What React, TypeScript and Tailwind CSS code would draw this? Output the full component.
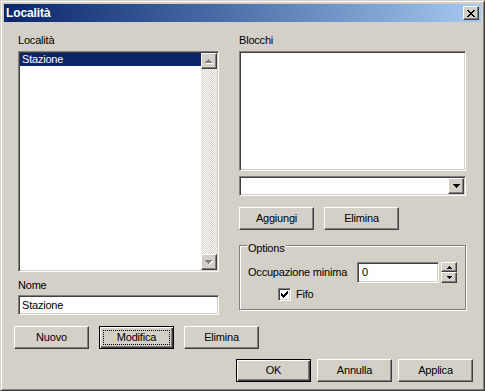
const raised = "bg-[#d4d0c8] border border-t-white border-l-white border-r-[#404040] border-b-[#404040] shadow-[inset_-1px_-1px_#808080]";
const sunken = "bg-white border border-t-[#808080] border-l-[#808080] border-r-white border-b-white shadow-[inset_1px_1px_#404040,inset_-1px_-1px_#d4d0c8]";

function Arrow({ d, w, h, disabled }: { d: string; w: number; h: number; disabled?: boolean }) {
    if (disabled) {
        return (
            <svg width={w + 1} height={h + 1} viewBox={`0 0 ${w + 1} ${h + 1}`} shapeRendering="crispEdges">
                <path d={d} fill="#ffffff" transform="translate(1 1)" />
                <path d={d} fill="#808080" />
            </svg>
        );
    }
    return (
        <svg width={w} height={h} viewBox={`0 0 ${w} ${h}`} shapeRendering="crispEdges">
            <path d={d} fill="#000000" />
        </svg>
    );
}

const UP7 = "M3 0h1v1h1v1h1v1h1v1H0V3h1V2h1V1h1z";
const DOWN7 = "M0 0h7v1h-1v1h-1v1h-1v1h-1V3H2V2H1V1H0z";
const UP5 = "M2 0h1v1h1v1h1v1H0V2h1V1h1z";
const DOWN5 = "M0 0h5v1H4v1H3v1H2V2H1V1H0z";

function Button({ label, isDefault, focused }: { label: string; isDefault?: boolean; focused?: boolean }) {
    // bottone windows classico, il default ha il bordo nero
    const cls = isDefault
        ? "bg-[#d4d0c8] border border-black shadow-[inset_1px_1px_#ffffff,inset_-1px_-1px_#404040,inset_-2px_-2px_#808080]"
        : raised;
    return (
        <div className={`${cls} w-[75px] h-[23px] flex p-[3px]`}>
            <div className={`flex-1 flex items-center justify-center border ${focused ? "border-dotted border-black" : "border-transparent"}`}>
                {label}
            </div>
        </div>
    );
}

function App() {
    return (
        <div className="w-[485px] h-[391px] flex flex-col p-[3px] bg-[#d4d0c8] border border-t-[#d4d0c8] border-l-[#d4d0c8] border-r-[#404040] border-b-[#404040] shadow-[inset_1px_1px_#ffffff,inset_-1px_-1px_#808080] font-['Liberation_Sans',Arial,sans-serif] text-[11px] leading-[13px] tracking-[-0.2px] text-black">

            {/* ------------------------------------- BARRA DEL TITOLO */}
            <div className="h-[18px] flex items-center justify-between bg-linear-to-r from-[#0a246a] to-[#a6caf0] pl-[2px] pr-[2px]">
                <span className="font-bold text-white text-[12px] tracking-[-0.1px]">Località</span>
                <div className={`${raised} w-[16px] h-[14px] flex items-center justify-center`}>
                    <svg width="8" height="7" viewBox="0 0 8 7" shapeRendering="crispEdges">
                        <path fill="#000" d="M0 0h2v1H0z M6 0h2v1H6z M1 1h2v1H1z M5 1h2v1H5z M2 2h4v1H2z M3 3h2v1H3z M2 4h4v1H2z M1 5h2v1H1z M5 5h2v1H5z M0 6h2v1H0z M6 6h2v1H6z" />
                    </svg>
                </div>
            </div>

            <div className="flex-1 flex flex-col pl-[10px] pt-[12px]">
                <div className="flex items-start">

                    {/* ------------------------------------- COLONNA SINISTRA */}
                    <div className="flex flex-col ml-[4px] w-[201px]">
                        <span>Località</span>
                        <div className={`${sunken} mt-[4px] h-[221px] flex p-[1px]`}>
                            <div className="flex-1">
                                <div className="h-[13px] bg-[#0a246a] text-white pl-[2px]">Stazione</div>
                            </div>
                            <div className="w-[16px] flex flex-col">
                                <div className={`${raised} h-[16px] flex items-center justify-center`}>
                                    <Arrow d={UP7} w={7} h={4} disabled />
                                </div>
                                <div className="flex-1 bg-[image:repeating-conic-gradient(#d4d0c8_0_25%,#ffffff_0_50%)] bg-size-[2px_2px]" />
                                <div className={`${raised} h-[16px] flex items-center justify-center`}>
                                    <Arrow d={DOWN7} w={7} h={4} disabled />
                                </div>
                            </div>
                        </div>
                        <span className="mt-[7px]">Nome</span>
                        <div className={`${sunken} mt-[3px] h-[20px] flex items-center pl-[3px]`}>Stazione</div>
                    </div>

                    {/* ------------------------------------- COLONNA DESTRA */}
                    <div className="flex flex-col ml-[20px] w-[227px]">
                        <span>Blocchi</span>
                        <div className={`${sunken} mt-[4px] h-[120px]`} />
                        <div className={`${sunken} mt-[5px] h-[20px] flex justify-end items-center p-[1px]`}>
                            <div className={`${raised} w-[16px] h-[16px] flex items-center justify-center`}>
                                <Arrow d={DOWN7} w={7} h={4} />
                            </div>
                        </div>
                        <div className="flex gap-[10px] mt-[11px]">
                            <Button label="Aggiungi" />
                            <Button label="Elimina" />
                        </div>

                        {/* ------------------------------------- OPTIONS */}
                        <div className="mt-[15px] border border-[#808080] shadow-[inset_1px_1px_#ffffff,1px_1px_#ffffff] pl-[8px] pb-[8px] flex flex-col">
                            <span className="-mt-[4px] self-start bg-[#d4d0c8] px-[1px] -ml-[1px]">Options</span>
                            <div className="flex items-center mt-[7px]">
                                <span className="w-[109px]">Occupazione minima</span>
                                <div className={`${sunken} w-[82px] h-[21px] flex items-center pl-[4px]`}>0</div>
                                <div className="ml-[2px] w-[16px] h-[21px] flex flex-col">
                                    <div className={`${raised} h-[10px] flex items-center justify-center`}>
                                        <Arrow d={UP5} w={5} h={3} />
                                    </div>
                                    <div className={`${raised} h-[11px] flex items-center justify-center`}>
                                        <Arrow d={DOWN5} w={5} h={3} />
                                    </div>
                                </div>
                            </div>
                            <div className="flex items-center mt-[5px] ml-[30px] gap-[5px]">
                                <div className={`${sunken} w-[13px] h-[13px] flex items-center justify-center`}>
                                    <svg width="7" height="7" viewBox="0 0 7 7" shapeRendering="crispEdges">
                                        <path fill="#000" d="M6 0h1v3H6v1H5v1H4v1H3v1H2V6H1V5H0V2h1v1h1v1h1V3h1V2h1V1h1z" />
                                    </svg>
                                </div>
                                <span>Fifo</span>
                            </div>
                        </div>
                    </div>
                </div>

                {/* ------------------------------------- BOTTONI LOCALITÀ */}
                <div className="flex gap-[10px] mt-[11px]">
                    <Button label="Nuovo" />
                    <Button label="Modifica" isDefault focused />
                    <Button label="Elimina" />
                </div>

                {/* ------------------------------------- OK / ANNULLA / APPLICA */}
                <div className="flex justify-end gap-[6px] mt-[10px] mr-[8px]">
                    <Button label="OK" isDefault />
                    <Button label="Annulla" />
                    <Button label="Applica" />
                </div>
            </div>
        </div>
    );
}

export default App;
